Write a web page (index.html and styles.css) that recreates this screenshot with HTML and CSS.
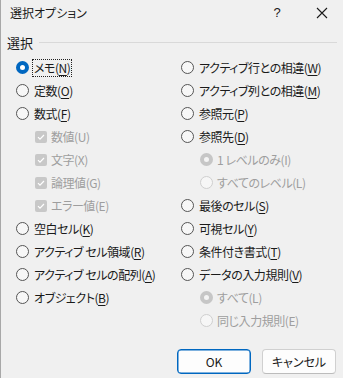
FILE: index.html
```html
<!DOCTYPE html>
<html lang="ja">
<head>
<meta charset="utf-8">
<link rel="stylesheet" href="styles.css">
</head>
<body>
<div class="dialog">
  <div class="titlebar">
    <span class="title">選択オプション</span>
    <span class="help">?</span>
    <span class="close">
      <svg width="12" height="12" viewBox="0 0 12 12"><path d="M1 1L11 11M11 1L1 11" stroke="#1a1a1a" stroke-width="1.1" fill="none"/></svg>
    </span>
  </div>
  <div class="group-head"><span>選択</span><span class="rule"></span></div>
  <div class="cols">
    <div class="col">
      <div class="row"><span class="radio checked"></span><span class="lbl focus">メモ(<u>N</u>)</span></div>
      <div class="row"><span class="radio"></span><span class="lbl">定数(<u>O</u>)</span></div>
      <div class="row"><span class="radio"></span><span class="lbl">数式(<u>F</u>)</span></div>
      <div class="row sub dis"><span class="check"><svg width="12" height="12" viewBox="0 0 12 12"><path d="M3 6.2L5 8.2L9 4" stroke="#fff" stroke-width="1.2" fill="none"/></svg></span><span class="lbl">数値(U)</span></div>
      <div class="row sub dis"><span class="check"><svg width="12" height="12" viewBox="0 0 12 12"><path d="M3 6.2L5 8.2L9 4" stroke="#fff" stroke-width="1.2" fill="none"/></svg></span><span class="lbl">文字(X)</span></div>
      <div class="row sub dis"><span class="check"><svg width="12" height="12" viewBox="0 0 12 12"><path d="M3 6.2L5 8.2L9 4" stroke="#fff" stroke-width="1.2" fill="none"/></svg></span><span class="lbl">論理値(G)</span></div>
      <div class="row sub dis"><span class="check"><svg width="12" height="12" viewBox="0 0 12 12"><path d="M3 6.2L5 8.2L9 4" stroke="#fff" stroke-width="1.2" fill="none"/></svg></span><span class="lbl">エラー値(E)</span></div>
      <div class="row"><span class="radio"></span><span class="lbl">空白セル(<u>K</u>)</span></div>
      <div class="row"><span class="radio"></span><span class="lbl">アクティブ セル領域(<u>R</u>)</span></div>
      <div class="row"><span class="radio"></span><span class="lbl">アクティブ セルの配列(<u>A</u>)</span></div>
      <div class="row"><span class="radio"></span><span class="lbl">オブジェクト(<u>B</u>)</span></div>
    </div>
    <div class="col">
      <div class="row"><span class="radio"></span><span class="lbl">アクティブ行との相違(<u>W</u>)</span></div>
      <div class="row"><span class="radio"></span><span class="lbl">アクティブ列との相違(<u>M</u>)</span></div>
      <div class="row"><span class="radio"></span><span class="lbl">参照元(<u>P</u>)</span></div>
      <div class="row"><span class="radio"></span><span class="lbl">参照先(<u>D</u>)</span></div>
      <div class="row sub dis"><span class="radio dchecked"></span><span class="lbl">1 レベルのみ(I)</span></div>
      <div class="row sub dis"><span class="radio"></span><span class="lbl">すべてのレベル(L)</span></div>
      <div class="row"><span class="radio"></span><span class="lbl">最後のセル(<u>S</u>)</span></div>
      <div class="row"><span class="radio"></span><span class="lbl">可視セル(<u>Y</u>)</span></div>
      <div class="row"><span class="radio"></span><span class="lbl">条件付き書式(<u>T</u>)</span></div>
      <div class="row"><span class="radio"></span><span class="lbl">データの入力規則(<u>V</u>)</span></div>
      <div class="row sub dis"><span class="radio dchecked"></span><span class="lbl">すべて(L)</span></div>
      <div class="row sub dis"><span class="radio"></span><span class="lbl">同じ入力規則(E)</span></div>
    </div>
  </div>
  <div class="buttons">
    <button class="btn primary">OK</button>
    <button class="btn">キャンセル</button>
  </div>
</div>
</body>
</html>
```
FILE: styles.css
```css
html, body {
  margin: 0;
  padding: 0;
  background: #f0f0f0;
}
body {
  font-family: "Noto Sans CJK JP", "Noto Sans", sans-serif;
  font-size: 12px;
  color: #1a1a1a;
  font-feature-settings: "palt";
}
.dialog {
  width: 343px;
  height: 378px;
  box-sizing: border-box;
  border-left: 1px solid #a8a8a8;
}
.titlebar {
  height: 25px;
  display: flex;
  align-items: center;
  padding-left: 9px;
}
.title {
  flex: 1;
  line-height: 1;
}
.help {
  width: 12px;
  margin-right: 33px;
  font-family: "Liberation Sans", sans-serif;
  font-size: 13px;
  text-align: center;
}
.close {
  display: flex;
  margin-right: 15px;
}
.group-head {
  margin-top: 9px;
  height: 16px;
  display: flex;
  align-items: center;
  padding-left: 6px;
  padding-right: 6px;
  gap: 6px;
  font-size: 13px;
}
.rule {
  flex: 1;
  height: 1px;
  background: #d9d9d9;
}
.cols {
  margin-top: 6px;
  display: grid;
  grid-template-columns: 165px 1fr;
  padding-left: 15px;
}
.row {
  height: 23px;
  display: flex;
  align-items: center;
  gap: 5px;
}
.row.sub {
  padding-left: 19px;
  gap: 4px;
}
.lbl {
  line-height: 16px;
  white-space: nowrap;
  letter-spacing: -0.45px;
}
.lbl u {
  text-underline-offset: 2px;
}
.focus {
  outline: 1px dotted #222;
  outline-offset: 0;
  padding: 0 1px;
  margin-left: -1px;
}
.radio {
  width: 13px;
  height: 13px;
  box-sizing: border-box;
  border: 1px solid #555;
  border-radius: 50%;
  background: #f7f7f7;
  flex: none;
}
.radio.checked {
  border: 4px solid #0067c0;
  background: #fff;
}
.dis {
  color: #9e9e9e;
}
.dis .radio {
  border-color: #cfcfcf;
  background: #f6f6f6;
}
.dis .radio.dchecked {
  border: 4px solid #c6c6c6;
  background: #f4f4f4;
}
.check {
  width: 12px;
  height: 12px;
  border-radius: 2px;
  background: #c8c8c8;
  display: flex;
  flex: none;
}
.buttons {
  margin-top: 17px;
  display: flex;
  justify-content: flex-end;
  gap: 11px;
  padding-right: 7px;
}
.btn {
  width: 74px;
  height: 25px;
  box-sizing: border-box;
  border: 1px solid #d0d0d0;
  border-bottom-color: #bcbcbc;
  border-radius: 4px;
  background: #fdfdfd;
  font-family: "Noto Sans CJK JP", "Noto Sans", sans-serif;
  font-feature-settings: "palt";
  font-size: 12px;
  color: #1a1a1a;
  padding: 0;
}
.btn.primary {
  border: 1px solid #0067c0;
  box-shadow: inset 0 0 0 0.5px #0067c0;
}
```
